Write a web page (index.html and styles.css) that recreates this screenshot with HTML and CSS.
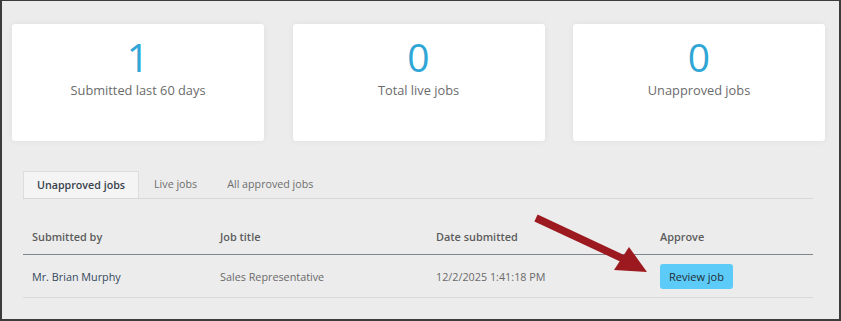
FILE: index.html
```html
<!DOCTYPE html>
<html lang="en">
<head>
<meta charset="utf-8">
<title>Jobs dashboard</title>
<link rel="stylesheet" href="styles.css">
</head>
<body>
<div class="frame">
  <div class="stats">
    <div class="card"><div class="num">1</div><div class="label">Submitted last 60 days</div></div>
    <div class="card"><div class="num">0</div><div class="label">Total live jobs</div></div>
    <div class="card"><div class="num">0</div><div class="label">Unapproved jobs</div></div>
  </div>
  <div class="panel">
    <div class="tabs">
      <div class="tab active">Unapproved jobs</div>
      <div class="tab">Live jobs</div>
      <div class="tab">All approved jobs</div>
    </div>
    <table class="jobs">
      <thead>
        <tr>
          <th class="c1">Submitted by</th>
          <th class="c2">Job title</th>
          <th class="c3">Date submitted</th>
          <th class="c4">Approve</th>
        </tr>
      </thead>
      <tbody>
        <tr>
          <td class="name">Mr. Brian Murphy</td>
          <td>Sales Representative</td>
          <td>12/2/2025 1:41:18 PM</td>
          <td><button class="review">Review job</button></td>
        </tr>
      </tbody>
    </table>
  </div>
</div>
<svg class="arrow" width="841" height="321" viewBox="0 0 841 321">
  <line x1="536" y1="218" x2="628" y2="261" stroke="#9c1a1f" stroke-width="7.5" stroke-linecap="butt"/>
  <polygon points="647,272 629,247 614,270" fill="#9c1a1f"/>
</svg>
</body>
</html>
```
FILE: styles.css
```css
html, body {
  margin: 0;
  padding: 0;
}
body {
  position: relative;
  width: 841px;
  height: 321px;
  font-family: "Open Sans", "Liberation Sans", sans-serif;
  background: #ececec;
  overflow: hidden;
}
.frame {
  box-sizing: border-box;
  width: 841px;
  height: 321px;
  border-style: solid;
  border-color: #3c3c3c;
  border-width: 1px 2px 2px 2px;
  background: #ececec;
  padding: 23px 14px 0 10px;
}
.stats {
  display: grid;
  grid-template-columns: 252px 252px 252px;
  column-gap: 28.5px;
}
.card {
  background: #fff;
  height: 117px;
  border-radius: 3px;
  box-shadow: 0 0 6px rgba(0, 0, 0, 0.06);
  text-align: center;
  box-sizing: border-box;
  padding-top: 10px;
}
.num {
  font-size: 39px;
  line-height: 46px;
  color: #2fa6d6;
}
.label {
  font-size: 12.8px;
  line-height: 20px;
  color: #6b6b6b;
}
.panel {
  margin: 30px 12px 0 11px;
}
.tabs {
  display: flex;
  border-bottom: 1px solid #d7d7d7;
  height: 27px;
}
.tab {
  font-size: 10.7px;
  line-height: 26px;
  padding: 0 15px 0 15px;
  color: #6e6e6e;
}
.tab.active {
  background: #f4f4f4;
  border: 1px solid #dddddd;
  border-bottom: none;
  color: #38424d;
  font-weight: 600;
  padding: 0 13px 0 13px;
  height: 27px;
  box-sizing: border-box;
}
.jobs {
  width: 790px;
  border-collapse: collapse;
  margin-top: 23px;
  table-layout: fixed;
}
.jobs th {
  text-align: left;
  font-size: 10.9px;
  font-weight: 600;
  color: #5c5c5c;
  padding: 6px 9px 8px;
  line-height: 18px;
  border-bottom: 1px solid #7f858b;
}
.c1 { width: 170px; }
.c2 { width: 198px; }
.c3 { width: 206px; }
.jobs td {
  font-size: 10.8px;
  color: #6a6a6a;
  padding: 0 9px;
  height: 42px;
  border-bottom: 1px solid #d9d9d9;
}
.jobs td.name {
  color: #34495c;
}
.review {
  font-family: "Open Sans", "Liberation Sans", sans-serif;
  font-size: 11px;
  font-weight: 500;
  color: #1e2b36;
  background: #5ccbf7;
  border: none;
  border-radius: 3px;
  height: 25px;
  padding: 0 9px;
  margin-top: 1px;
}
.arrow {
  position: absolute;
  left: 0;
  top: 0;
  pointer-events: none;
}
```
